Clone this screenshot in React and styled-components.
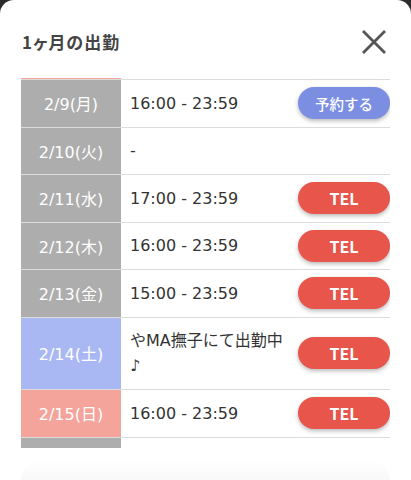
import React from 'react';
import styled, { createGlobalStyle } from 'styled-components';

const GlobalStyle = createGlobalStyle`
  html, body {
    margin: 0;
    padding: 0;
    background: #2b2b2b;
  }
  body {
    font-family: "DejaVu Sans", "Noto Sans CJK JP", sans-serif;
  }
`;

const shifts = [
  { date: '2/8(日)', kind: 'sun', text: '16:00 - 23:59', action: 'tel' },
  { date: '2/9(月)', kind: 'day', text: '16:00 - 23:59', action: 'reserve' },
  { date: '2/10(火)', kind: 'day', text: '-', action: null },
  { date: '2/11(水)', kind: 'day', text: '17:00 - 23:59', action: 'tel' },
  { date: '2/12(木)', kind: 'day', text: '16:00 - 23:59', action: 'tel' },
  { date: '2/13(金)', kind: 'day', text: '15:00 - 23:59', action: 'tel' },
  { date: '2/14(土)', kind: 'sat', text: 'やMA撫子にて出勤中♪', action: 'tel' },
  { date: '2/15(日)', kind: 'sun', text: '16:00 - 23:59', action: 'tel' },
  { date: '2/16(月)', kind: 'day', text: '-', action: null },
];

const dateColors = {
  day: '#adadad',
  sat: '#a9b8f2',
  sun: '#f5a49c',
};

const App = () => {
  return (
    <>
      <GlobalStyle />
      <Modal>
        <Header>
          <Title>1ヶ月の出勤</Title>
          <CloseButton aria-label="close">
            <svg width="26" height="26" viewBox="0 0 26 26">
              <path d="M2 2 L24 24 M24 2 L2 24" stroke="#555" strokeWidth="2.8" fill="none" />
            </svg>
          </CloseButton>
        </Header>
        <Scroller>
          <List>
            {shifts.map((s) => (
              <Row key={s.date}>
                <DateCell $kind={s.kind}>{s.date}</DateCell>
                <Content>
                  <Detail>{s.text}</Detail>
                  {s.action === 'reserve' && <ActionButton $variant="reserve">予約する</ActionButton>}
                  {s.action === 'tel' && <ActionButton $variant="tel">TEL</ActionButton>}
                </Content>
              </Row>
            ))}
          </List>
        </Scroller>
        <Footer />
      </Modal>
    </>
  );
};

export default App;

const Modal = styled.div`
  background: #fff;
  height: 480px;
  border-radius: 14px 14px 0 0;
  overflow: hidden;
  display: flex;
  flex-direction: column;
`;

const Header = styled.div`
  display: flex;
  align-items: center;
  justify-content: space-between;
  height: 78px;
  flex: 0 0 78px;
  padding: 5px 24px 0 22px;
  box-sizing: border-box;
`;

const Title = styled.h2`
  margin: 0;
  font-family: "Noto Sans CJK JP", sans-serif;
  font-feature-settings: "palt";
  font-size: 17px;
  font-weight: 700;
  color: #444;
  letter-spacing: 1px;
`;

const CloseButton = styled.button`
  border: none;
  background: none;
  padding: 0;
  width: 26px;
  height: 26px;
  display: flex;
`;

const Scroller = styled.div`
  margin: 0 21px;
  height: 370px;
  flex: 0 0 370px;
  overflow: hidden;
`;

const List = styled.div`
  margin-top: -45.5px;
`;

const Row = styled.div`
  display: flex;
  border-bottom: 1px solid #dcdcdc;
`;

const DateCell = styled.div`
  flex: 0 0 100px;
  display: flex;
  align-items: center;
  justify-content: center;
  background: ${(p) => dateColors[p.$kind]};
  color: #fff;
  font-size: 16px;
`;

const Content = styled.div`
  flex: 1;
  display: flex;
  align-items: center;
  gap: 12px;
  padding: 10.75px 0 10.75px 9px;
`;

const Detail = styled.div`
  flex: 1;
  font-size: 16px;
  line-height: 25px;
  color: #333;
`;

const ActionButton = styled.button`
  flex: 0 0 92px;
  height: 32px;
  margin: -4px 0;
  border: none;
  border-radius: 16px;
  background: ${(p) => (p.$variant === 'tel' ? '#e8554a' : '#7b8ee2')};
  color: #fff;
  font-family: "Noto Sans CJK JP", sans-serif;
  font-size: ${(p) => (p.$variant === 'tel' ? '16px' : '14.5px')};
  font-weight: ${(p) => (p.$variant === 'tel' ? 700 : 500)};
  box-shadow: 0 2px 4px rgba(0, 0, 0, 0.28);
`;

const Footer = styled.div`
  margin: 14px 21px 0;
  flex: 1;
  border-radius: 40px 40px 0 0;
  background: linear-gradient(#fefefe, #f8f8f8);
`;
